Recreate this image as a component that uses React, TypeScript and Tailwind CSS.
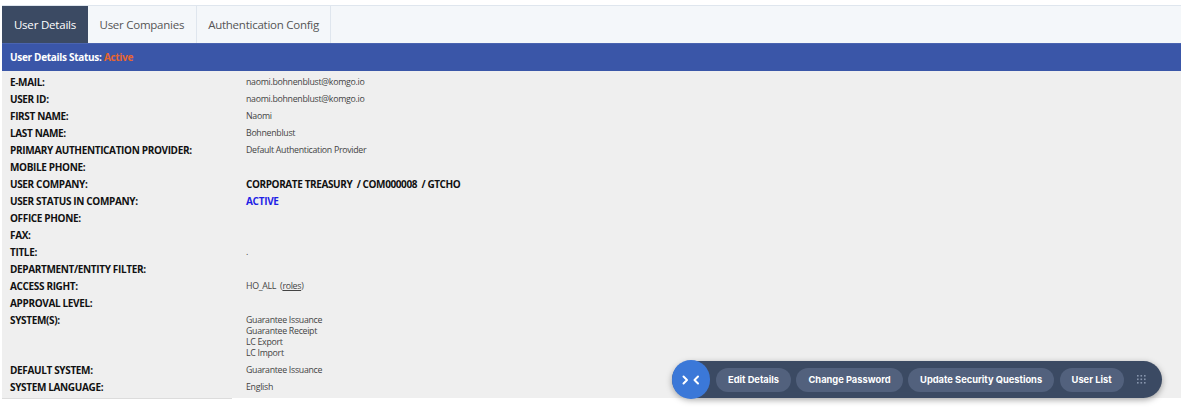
import React from "react";

const ROWS: { label: string; value?: React.ReactNode; lines?: string[] }[] = [
  { label: "E-MAIL:", value: "naomi.bohnenblust@komgo.io" },
  { label: "USER ID:", value: "naomi.bohnenblust@komgo.io" },
  { label: "FIRST NAME:", value: "Naomi" },
  { label: "LAST NAME:", value: "Bohnenblust" },
  { label: "PRIMARY AUTHENTICATION PROVIDER:", value: "Default Authentication Provider" },
  { label: "MOBILE PHONE:" },
  {
    label: "USER COMPANY:",
    value: (
      <span className="whitespace-pre text-[10px] font-bold tracking-[-0.4px] text-[#111]">
        CORPORATE TREASURY  / COM000008  / GTCHO
      </span>
    ),
  },
  {
    label: "USER STATUS IN COMPANY:",
    value: <span className="text-[10px] font-bold tracking-[-0.3px] text-[#1f1fe6]">ACTIVE</span>,
  },
  { label: "OFFICE PHONE:" },
  { label: "FAX:" },
  { label: "TITLE:", value: "." },
  { label: "DEPARTMENT/ENTITY FILTER:" },
  {
    label: "ACCESS RIGHT:",
    value: (
      <span className="whitespace-pre">
        HO_ALL  (<span className="underline">roles</span>)
      </span>
    ),
  },
  { label: "APPROVAL LEVEL:" },
  {
    label: "SYSTEM(S):",
    lines: ["Guarantee Issuance", "Guarantee Receipt", "LC Export", "LC Import"],
  },
  { label: "DEFAULT SYSTEM:", value: "Guarantee Issuance" },
  { label: "SYSTEM LANGUAGE:", value: "English" },
];

const TABS = ["User Details", "User Companies", "Authentication Config"];

function Chevrons() {
  return (
    <svg width="20" height="12" viewBox="0 0 20 12" fill="none" stroke="white" strokeWidth="2" strokeLinecap="round" strokeLinejoin="round">
      <path d="M2.5 2.5 L6 6 L2.5 9.5" />
      <path d="M17 2.5 L13.5 6 L17 9.5" />
    </svg>
  );
}

function GridDots() {
  const dots = [];
  for (let r = 0; r < 3; r++)
    for (let c = 0; c < 3; c++) dots.push(<rect key={`${r}-${c}`} x={c * 3.5} y={r * 3.5} width="1.6" height="1.6" fill="#8795ad" />);
  return (
    <svg width="10" height="10" viewBox="0 0 10 10">
      {dots}
    </svg>
  );
}

export default function App() {
  return (
    <div className="relative h-[407px] w-[1186px] overflow-hidden bg-white font-['Open_Sans',sans-serif]">
      <div className="ml-[2px] mt-[5px] w-[1179px]">
        {/* tabs */}
        <div className="flex h-[38px] border-t border-[#dfe6ee] bg-[#f4f7fa]">
          {TABS.map((t, i) => (
            <div
              key={t}
              className={
                i === 0
                  ? "flex w-[86px] items-center justify-center bg-[#3b4a63] text-[11.5px] tracking-[-0.2px] text-white"
                  : "flex items-center border-r border-[#dfe6ee] px-[11.5px] text-[11.5px] tracking-[-0.25px] text-[#555]"
              }
            >
              {t}
            </div>
          ))}
        </div>

        {/* status bar */}
        <div className="flex h-[28px] items-center border-t border-[#4a64b0] bg-[#3a56a8] px-[8px] text-[10px] font-bold tracking-[-0.3px] text-white">
          User Details Status:&nbsp;<span className="text-[#e8652d]">Active</span>
        </div>

        {/* details */}
        <div className="bg-[#efefef] pb-[2px] pt-[3px]">
          {ROWS.map((r) => (
            <div key={r.label} className={r.lines ? "flex h-[49.5px]" : "flex h-[17px]"}>
              <div className="w-[244px] shrink-0 pl-[8px] text-[10px] font-bold leading-[17px] tracking-[-0.35px] text-[#111]">
                {r.label}
              </div>
              {r.lines ? (
                <div className="pt-[2.5px] text-[8.8px] leading-[11.3px] tracking-[-0.3px] text-[#444]">
                  {r.lines.map((l) => (
                    <div key={l}>{l}</div>
                  ))}
                </div>
              ) : (
                <div className="text-[8.8px] leading-[16px] tracking-[-0.3px] text-[#444]">{r.value}</div>
              )}
            </div>
          ))}
        </div>
        <div className="h-px w-[230px] bg-[#dcdcdc]" />
      </div>

      {/* floating action bar */}
      <div className="absolute left-[672px] top-[361px] flex h-[37px] w-[490px] items-center rounded-full bg-[#3b4a63] shadow-[0_2px_6px_rgba(0,0,0,0.35)] font-['Inter',sans-serif]">
        <div className="flex h-[39px] w-[38px] shrink-0 items-center justify-center rounded-full bg-[#3b78d8]">
          <Chevrons />
        </div>
        <div className="ml-[6px] flex items-center gap-[5.5px]">
          {["Edit Details", "Change Password", "Update Security Questions", "User List"].map((b) => (
            <button
              key={b}
              className="h-[24px] whitespace-nowrap rounded-full bg-[#52617d] px-[12px] text-[9.3px] font-bold text-white"
            >
              {b}
            </button>
          ))}
        </div>
        <div className="ml-[13px]">
          <GridDots />
        </div>
      </div>
    </div>
  );
}
